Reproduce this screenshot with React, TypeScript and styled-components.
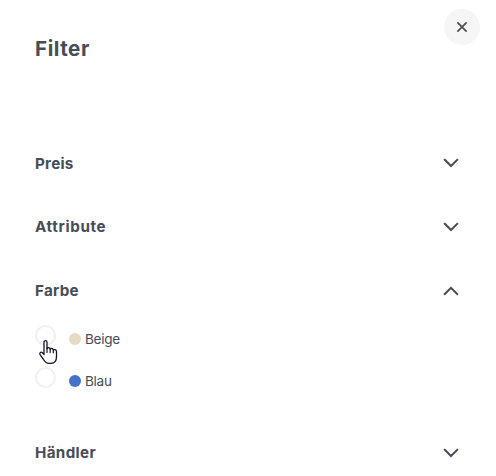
import React from 'react';
import styled, { createGlobalStyle } from 'styled-components';

const GlobalStyle = createGlobalStyle`
  * { box-sizing: border-box; }
  body { margin: 0; background: #fff; color: #474d57; font-family: Inter, "Open Sans", sans-serif; overflow: hidden; }
`;

const Panel = styled.main`
  position: relative;
  width: 496px;
  height: 476px;
  overflow: hidden;
  padding: 35px 37px 0 35px;
`;

const CloseButton = styled.button`
  position: absolute;
  top: 9px;
  right: 16px;
  width: 36px;
  height: 36px;
  display: grid;
  place-items: center;
  padding: 0;
  border: 0;
  border-radius: 50%;
  background: #f6f6f6;
  color: #474d57;
`;

const Title = styled.h1`
  margin: 0 0 86px;
  height: 28px;
  font-size: 20.6px;
  line-height: 28px;
  font-weight: 650;
  letter-spacing: 0.55px;
`;

const Label = styled.span<{ $spacing: number; $top: number }>`
  height: 26px;
  padding-top: ${(p) => p.$top}px;
  letter-spacing: ${(p) => p.$spacing}px;
`;

const SectionHeader = styled.button`
  display: flex;
  align-items: center;
  justify-content: space-between;
  width: 100%;
  height: 28px;
  padding: 0;
  border: 0;
  background: none;
  color: inherit;
  font: 650 15.2px/24px Inter, sans-serif;
`;

const Sections = styled.div`
  display: grid;
  grid-template-rows: 64px 64px 162px 28px;
`;

const Options = styled.div`
  display: grid;
  gap: 18px;
  padding-top: 20px;
`;

const Option = styled.label`
  display: flex;
  align-items: flex-start;
  height: 24px;
`;

const Radio = styled.span`
  width: 21px;
  height: 21px;
  margin-right: 13px;
  border: 2px solid #f0f0f0;
  border-radius: 50%;
`;

const Swatch = styled.span<{ $color: string }>`
  width: 12px;
  height: 12px;
  margin: 8px 4px 0 0;
  border-radius: 50%;
  background: ${(p) => p.$color};
`;

const OptionText = styled.span`
  padding-top: 4px;
  font-size: 13.6px;
  line-height: 20px;
  letter-spacing: -0.3px;
`;

const Pointer = styled.svg`
  position: absolute;
  left: 38px;
  top: 339px;
`;

const ChevronIcon = styled.svg`
  flex: none;
`;

const Chevron = ({ up = false }: { up?: boolean }) => (
  <ChevronIcon width="16" height="10" viewBox="0 0 16 10" fill="none" stroke="#474d57" strokeWidth="2">
    <path d={up ? 'M1.8 8 8 1.8 14.2 8' : 'M1.8 1.8 8 8l6.2-6.2'} strokeLinecap="square" strokeLinejoin="miter" />
  </ChevronIcon>
);

type SectionProps = { name: string; spacing: number; top?: number; open?: boolean; children?: React.ReactNode };

const Section = ({ name, spacing, top = 1, open, children }: SectionProps) => (
  <section>
    <SectionHeader aria-expanded={!!open}>
      <Label $spacing={spacing} $top={top}>{name}</Label>
      <Chevron up={open} />
    </SectionHeader>
    {children}
  </section>
);

const colors = [
  { name: 'Beige', color: '#e6dbc2' },
  { name: 'Blau', color: '#4472c8' },
];

export default function App() {
  return (
    <>
      <GlobalStyle />
      <Panel>
        <Title>Filter</Title>
        <CloseButton aria-label="Schließen">
          <svg width="12" height="12" viewBox="0 0 12 12" stroke="currentColor" strokeWidth="1.7">
            <path d="m1.4 1.4 9.2 9.2m0-9.2-9.2 9.2" />
          </svg>
        </CloseButton>
        <Sections>
          <Section name="Preis" spacing={0.25} top={2} />
          <Section name="Attribute" spacing={0.65} />
          <Section name="Farbe" spacing={0.25} open>
            <Options>
              {colors.map((c) => (
                <Option key={c.name}>
                  <Radio />
                  <Swatch $color={c.color} />
                  <OptionText>{c.name}</OptionText>
                </Option>
              ))}
            </Options>
          </Section>
          <Section name="Händler" spacing={0.35} />
        </Sections>
        <Pointer width="20" height="26" viewBox="0 0 20 26">
          <path
            d="M6 15.5V3.2c0-2.2 3-2.2 3 0v6.3c.3-1.3 3.1-1.2 3.2.6.5-1.1 3-.8 3.1.9.8-.9 3.2-.4 3.2 1.4v5.4c0 4.2-2.2 6.6-5.6 6.6H11c-3 0-4.6-2.1-5.8-4.4L2 15.6c-.8-1.8 1-3.1 2.3-1.9Z"
            fill="#fff"
            stroke="#17162b"
            strokeWidth="1.3"
            strokeLinejoin="round"
          />
          <path d="M9 9v4.4M12.2 10v3.6M15.3 11v2.8" fill="none" stroke="#17162b" strokeWidth="1.2" strokeLinecap="round" />
        </Pointer>
      </Panel>
    </>
  );
}
